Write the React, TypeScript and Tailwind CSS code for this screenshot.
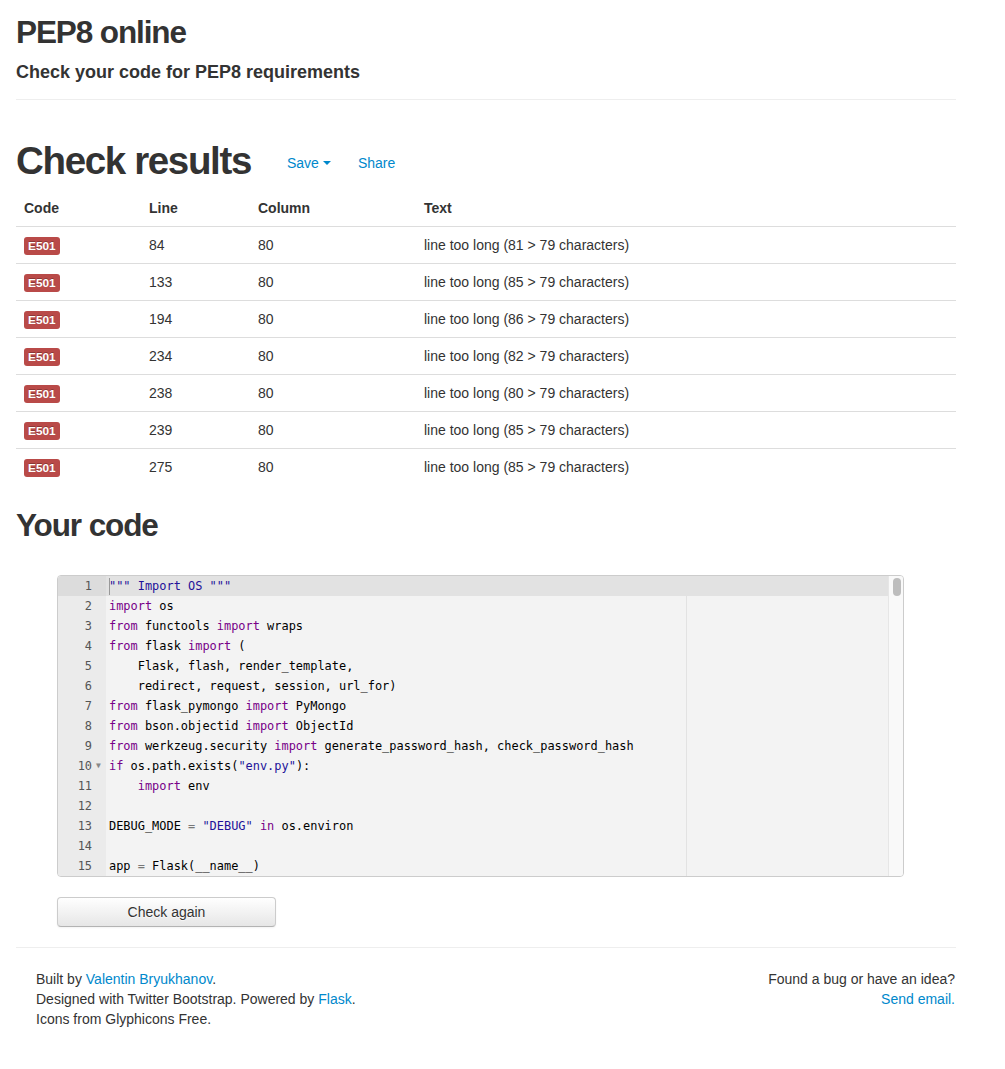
import React from "react";

type Tok = [string, string?];

const K = "text-[#770088]";
const S = "text-[#221199]";
const O = "text-[#777]";

const code: Tok[][] = [
  [['""" Import OS """', S]],
  [["import", K], [" os"]],
  [["from", K], [" functools "], ["import", K], [" wraps"]],
  [["from", K], [" flask "], ["import", K], [" ("]],
  [["    Flask, flash, render_template,"]],
  [["    redirect, request, session, url_for)"]],
  [["from", K], [" flask_pymongo "], ["import", K], [" PyMongo"]],
  [["from", K], [" bson.objectid "], ["import", K], [" ObjectId"]],
  [["from", K], [" werkzeug.security "], ["import", K], [" generate_password_hash, check_password_hash"]],
  [["if", K], [" os.path.exists("], ['"env.py"', S], ["):"]],
  [["    "], ["import", K], [" env"]],
  [],
  [["DEBUG_MODE "], ["=", O], [" "], ['"DEBUG"', S], [" "], ["in", K], [" os.environ"]],
  [],
  [["app "], ["=", O], [" Flask(__name__)"]],
];

const rows = [
  ["84", "81"],
  ["133", "85"],
  ["194", "86"],
  ["234", "82"],
  ["238", "80"],
  ["239", "85"],
  ["275", "85"],
];

const mono = { fontFamily: '"DejaVu Sans Mono", "Liberation Mono", monospace', fontSize: 11.95 };

export default function App() {
  return (
    <div
      className="min-h-[1069px] bg-white text-[#333] text-[14px] leading-[20px]"
      style={{ fontFamily: '"Liberation Sans", Arial, Helvetica, sans-serif' }}
    >
      <div className="ml-4 w-[940px] pt-[12px]">
        <h2 className="text-[31.5px] leading-[40px] font-bold tracking-[-0.035em]">PEP8 online</h2>
        <h4 className="mt-[10px] text-[18px] leading-[20px] font-bold">
          Check your code for PEP8 requirements
        </h4>
        <hr className="mt-[17px] border-0 border-t border-[#eee]" />

        <div className="mt-[40.5px] flex items-start">
          <h1 className="text-[38.5px] leading-[40px] font-bold tracking-[-0.035em]">Check results</h1>
          <div className="ml-[36px] mt-[12px] flex items-center text-[#0088cc]">
            <span>Save</span>
            <span className="ml-[4px] mt-[1px] h-0 w-0 border-x-[4px] border-t-[4px] border-x-transparent border-t-[#0088cc]" />
            <span className="ml-[27px]">Share</span>
          </div>
        </div>

        <table className="mt-[9px] w-[940px] border-collapse">
          <thead>
            <tr>
              <th className="w-[125px] p-[8px] text-left font-bold">Code</th>
              <th className="w-[109px] p-[8px] text-left font-bold">Line</th>
              <th className="w-[166px] p-[8px] text-left font-bold">Column</th>
              <th className="p-[8px] text-left font-bold">Text</th>
            </tr>
          </thead>
          <tbody>
            {rows.map(([line, n]) => (
              <tr key={line} className="border-t border-[#ddd]">
                <td className="p-[8px]">
                  <span
                    className="inline-block rounded-[3px] bg-[#b94a48] px-[4px] py-[2px] text-[11.844px] font-bold leading-[14px] text-white"
                    style={{ textShadow: "0 -1px 0 rgba(0,0,0,0.25)" }}
                  >
                    E501
                  </span>
                </td>
                <td className="p-[8px]">{line}</td>
                <td className="p-[8px]">80</td>
                <td className="p-[8px]">line too long ({n} &gt; 79 characters)</td>
              </tr>
            ))}
          </tbody>
        </table>

        <h2 className="mt-[20.5px] text-[31.5px] leading-[40px] font-bold tracking-[-0.035em]">Your code</h2>

        <div className="ml-[41px] mt-[29.5px] w-[847px]">
          <div className="relative flex h-[302px] overflow-hidden rounded-[4px] border border-[#ccc] bg-[#f3f3f3]">
            {/* gutter */}
            <div className="w-[48px] shrink-0 bg-[#ebebeb] text-[#555]" style={mono}>
              {code.map((_, i) => (
                <div key={i} className={`flex h-[20px] items-center ${i === 0 ? "bg-[#dcdcdc]" : ""}`}>
                  <span className="w-[34px] text-right">{i + 1}</span>
                  <span className="ml-[4px] w-[10px] text-[8px] text-[#888]">{i === 9 ? "▼" : ""}</span>
                </div>
              ))}
            </div>
            {/* code */}
            <div className="relative flex-1 whitespace-pre text-black" style={mono}>
              <div className="pointer-events-none absolute top-0 bottom-0 left-[580px] w-px bg-[#e2e2e2]" />
              {code.map((toks, i) => (
                <div key={i} className={`relative flex h-[20px] items-center pl-[3px] ${i === 0 ? "bg-[#e2e2e2]" : ""}`}>
                  {i === 0 && <span className="absolute left-[3px] top-[2px] h-[17px] w-px bg-[#999]" />}
                  {toks.map(([t, c], j) => (
                    <span key={j} className={c ?? ""}>{t}</span>
                  ))}
                </div>
              ))}
            </div>
            {/* scrollbar */}
            <div className="w-[15px] shrink-0 border-l border-[#e6e6e6] bg-[#f9f9f9]">
              <div className="ml-[4px] mt-[2px] h-[18px] w-[8px] rounded-[4px] bg-[#bdbdbd]" />
            </div>
          </div>

          <button
            className="mt-[20px] h-[30px] w-[219px] rounded-[4px] border border-[#cccccc] border-b-[#b3b3b3] bg-gradient-to-b from-white to-[#e6e6e6] text-[14px] leading-[20px] text-[#333] shadow-[inset_0_1px_0_rgba(255,255,255,0.2),0_1px_2px_rgba(0,0,0,0.05)]"
            style={{ textShadow: "0 1px 1px rgba(255,255,255,0.75)" }}
          >
            Check again
          </button>
        </div>

        <hr className="mt-[20px] border-0 border-t border-[#eee]" />

        <div className="flex justify-between pt-[21px] pl-[20px] pr-[1px]">
          <div>
            <div>
              Built by <span className="text-[#0088cc]">Valentin Bryukhanov</span>.
            </div>
            <div>
              Designed with Twitter Bootstrap. Powered by <span className="text-[#0088cc]">Flask</span>.
            </div>
            <div>Icons from Glyphicons Free.</div>
          </div>
          <div className="text-right">
            <div>Found a bug or have an idea?</div>
            <div className="text-[#0088cc]">Send email.</div>
          </div>
        </div>
      </div>
    </div>
  );
}
